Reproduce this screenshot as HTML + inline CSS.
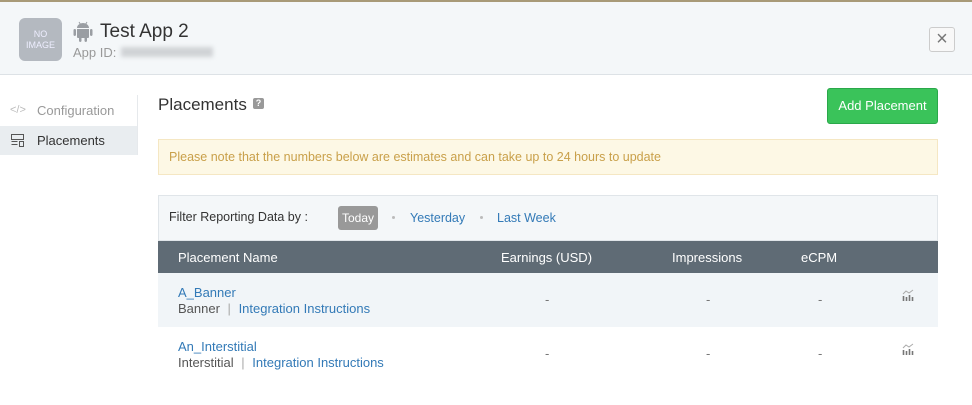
<!DOCTYPE html>
<html><head><style>
*{margin:0;padding:0;box-sizing:border-box}
body{width:972px;height:405px;overflow:hidden;background:#fff;font-family:"Liberation Sans",sans-serif;font-size:13px;color:#333;position:relative}
.a{position:absolute}
a{color:#337ab7;text-decoration:none}
</style></head><body>
<div class="a" style="left:0;top:0;width:972px;height:2px;background:#a89a78"></div>
<div class="a" style="left:0;top:2px;width:972px;height:73px;background:#f4f7f9;border-bottom:1px solid #dde2e6"></div>
<div class="a" style="left:19px;top:18px;width:43px;height:43px;background:#b4b9c0;border-radius:6px;color:#eef;font-size:9px;text-align:center;line-height:11px;padding-top:11px">NO<br>IMAGE</div>
<svg class="a" style="left:72px;top:21px" width="22" height="22" viewBox="0 0 22 22" fill="#9a9ea3"><path d="M5 8h12v8a1 1 0 0 1-1 1H6a1 1 0 0 1-1-1z"/><path d="M5 7a6 5 0 0 1 12 0z"/><rect x="1.5" y="8" width="2.5" height="7" rx="1.2"/><rect x="18" y="8" width="2.5" height="7" rx="1.2"/><rect x="7" y="16" width="2.5" height="5" rx="1.2"/><rect x="12.5" y="16" width="2.5" height="5" rx="1.2"/><path d="M7 1l1.5 2.5M15 1l-1.5 2.5" stroke="#9a9ea3"/></svg>
<div class="a" style="left:100px;top:21px;font-size:19px;color:#333">Test App 2</div>
<div class="a" style="left:73px;top:45px;font-size:13px;color:#999">App ID:</div>
<div class="a" style="left:121px;top:47px;width:92px;height:10px;background:#d0d3d6;filter:blur(2px)"></div>
<div class="a" style="left:929px;top:27px;width:26px;height:25px;border:1px solid #ccc;border-radius:3px;background:#f8f8f8;color:#777;font-size:20px;text-align:center;line-height:22px">×</div>
<div class="a" style="left:137px;top:95px;width:1px;height:60px;background:#e6e9ec"></div>
<div class="a" style="left:10px;top:104px;color:#bbb;font-size:11px">&lt;/&gt;</div>
<div class="a" style="left:37px;top:103px;color:#999">Configuration</div>
<div class="a" style="left:0;top:126px;width:137px;height:29px;background:#e9edf0"></div>
<svg class="a" style="left:11px;top:134px" width="13" height="13" viewBox="0 0 13 13" fill="none" stroke="#555"><rect x="0.5" y="0.5" width="12" height="5"/><path d="M0.5 7.5h6M0.5 10.5h6"/><rect x="8.5" y="7.5" width="4" height="5"/></svg>
<div class="a" style="left:37px;top:133px;color:#333">Placements</div>
<div class="a" style="left:158px;top:95px;font-size:17px;color:#333">Placements</div>
<div class="a" style="left:253px;top:98px;width:11px;height:11px;background:#999;border-radius:2px;color:#fff;font-size:9px;font-weight:bold;text-align:center;line-height:11px">?</div>
<div class="a" style="left:827px;top:88px;width:111px;height:36px;background:#3ac35a;border:1px solid #2aa84a;border-radius:3px;color:#fff;font-size:13px;text-align:center;line-height:34px">Add Placement</div>
<div class="a" style="left:158px;top:139px;width:780px;height:36px;background:#fdf8e5;border:1px solid #f5e7c3;color:#c9a04a;padding-left:10px;line-height:34px;font-size:12.5px">Please note that the numbers below are estimates and can take up to 24 hours to update</div>
<div class="a" style="left:158px;top:195px;width:780px;height:46px;background:#f4f7f9;border:1px solid #e0e5e9"></div>
<div class="a" style="left:169px;top:210px;font-size:12.5px;color:#333">Filter Reporting Data by :</div>
<div class="a" style="left:338px;top:206px;width:40px;height:24px;background:#999;border-radius:3px;color:#fff;font-size:12px;text-align:center;line-height:24px">Today</div>
<div class="a" style="left:392px;top:216px;width:3px;height:3px;border-radius:50%;background:#bbb"></div>
<div class="a" style="left:410px;top:211px;font-size:12.5px"><a>Yesterday</a></div>
<div class="a" style="left:480px;top:216px;width:3px;height:3px;border-radius:50%;background:#bbb"></div>
<div class="a" style="left:497px;top:211px;font-size:12.5px"><a>Last Week</a></div>
<div class="a" style="left:158px;top:241px;width:780px;height:32px;background:#5f6b75;color:#fff;font-size:13px">
<span class="a" style="left:20px;top:9px">Placement Name</span>
<span class="a" style="left:343px;top:9px">Earnings (USD)</span>
<span class="a" style="left:514px;top:9px">Impressions</span>
<span class="a" style="left:643px;top:9px">eCPM</span></div>
<div class="a" style="left:158px;top:273px;width:780px;height:54px;background:#f1f5f8"></div>
<div class="a" style="left:178px;top:285px;font-size:13px;line-height:16px"><a>A_Banner</a><br><span style="color:#555">Banner</span> <span style="color:#aaa;margin:0 4px">|</span> <a>Integration Instructions</a></div>
<div class="a" style="left:178px;top:339px;font-size:13px;line-height:16px"><a>An_Interstitial</a><br><span style="color:#555">Interstitial</span> <span style="color:#aaa;margin:0 4px">|</span> <a>Integration Instructions</a></div>
<div class="a" style="left:545px;top:292px;color:#777">-</div><div class="a" style="left:706px;top:292px;color:#777">-</div><div class="a" style="left:818px;top:292px;color:#777">-</div>
<div class="a" style="left:545px;top:346px;color:#777">-</div><div class="a" style="left:706px;top:346px;color:#777">-</div><div class="a" style="left:818px;top:346px;color:#777">-</div>
<svg class="a" style="left:902px;top:289px" width="13" height="12" viewBox="0 0 13 12"><path d="M1 5l3-3 3 2 4-3" stroke="#aaa" fill="none"/><path d="M1.5 7v5M4.5 8v4M7.5 6v6M10.5 8v4" stroke="#777" stroke-width="1.6"/></svg>
<svg class="a" style="left:902px;top:343px" width="13" height="12" viewBox="0 0 13 12"><path d="M1 5l3-3 3 2 4-3" stroke="#aaa" fill="none"/><path d="M1.5 7v5M4.5 8v4M7.5 6v6M10.5 8v4" stroke="#777" stroke-width="1.6"/></svg>
</body></html>
